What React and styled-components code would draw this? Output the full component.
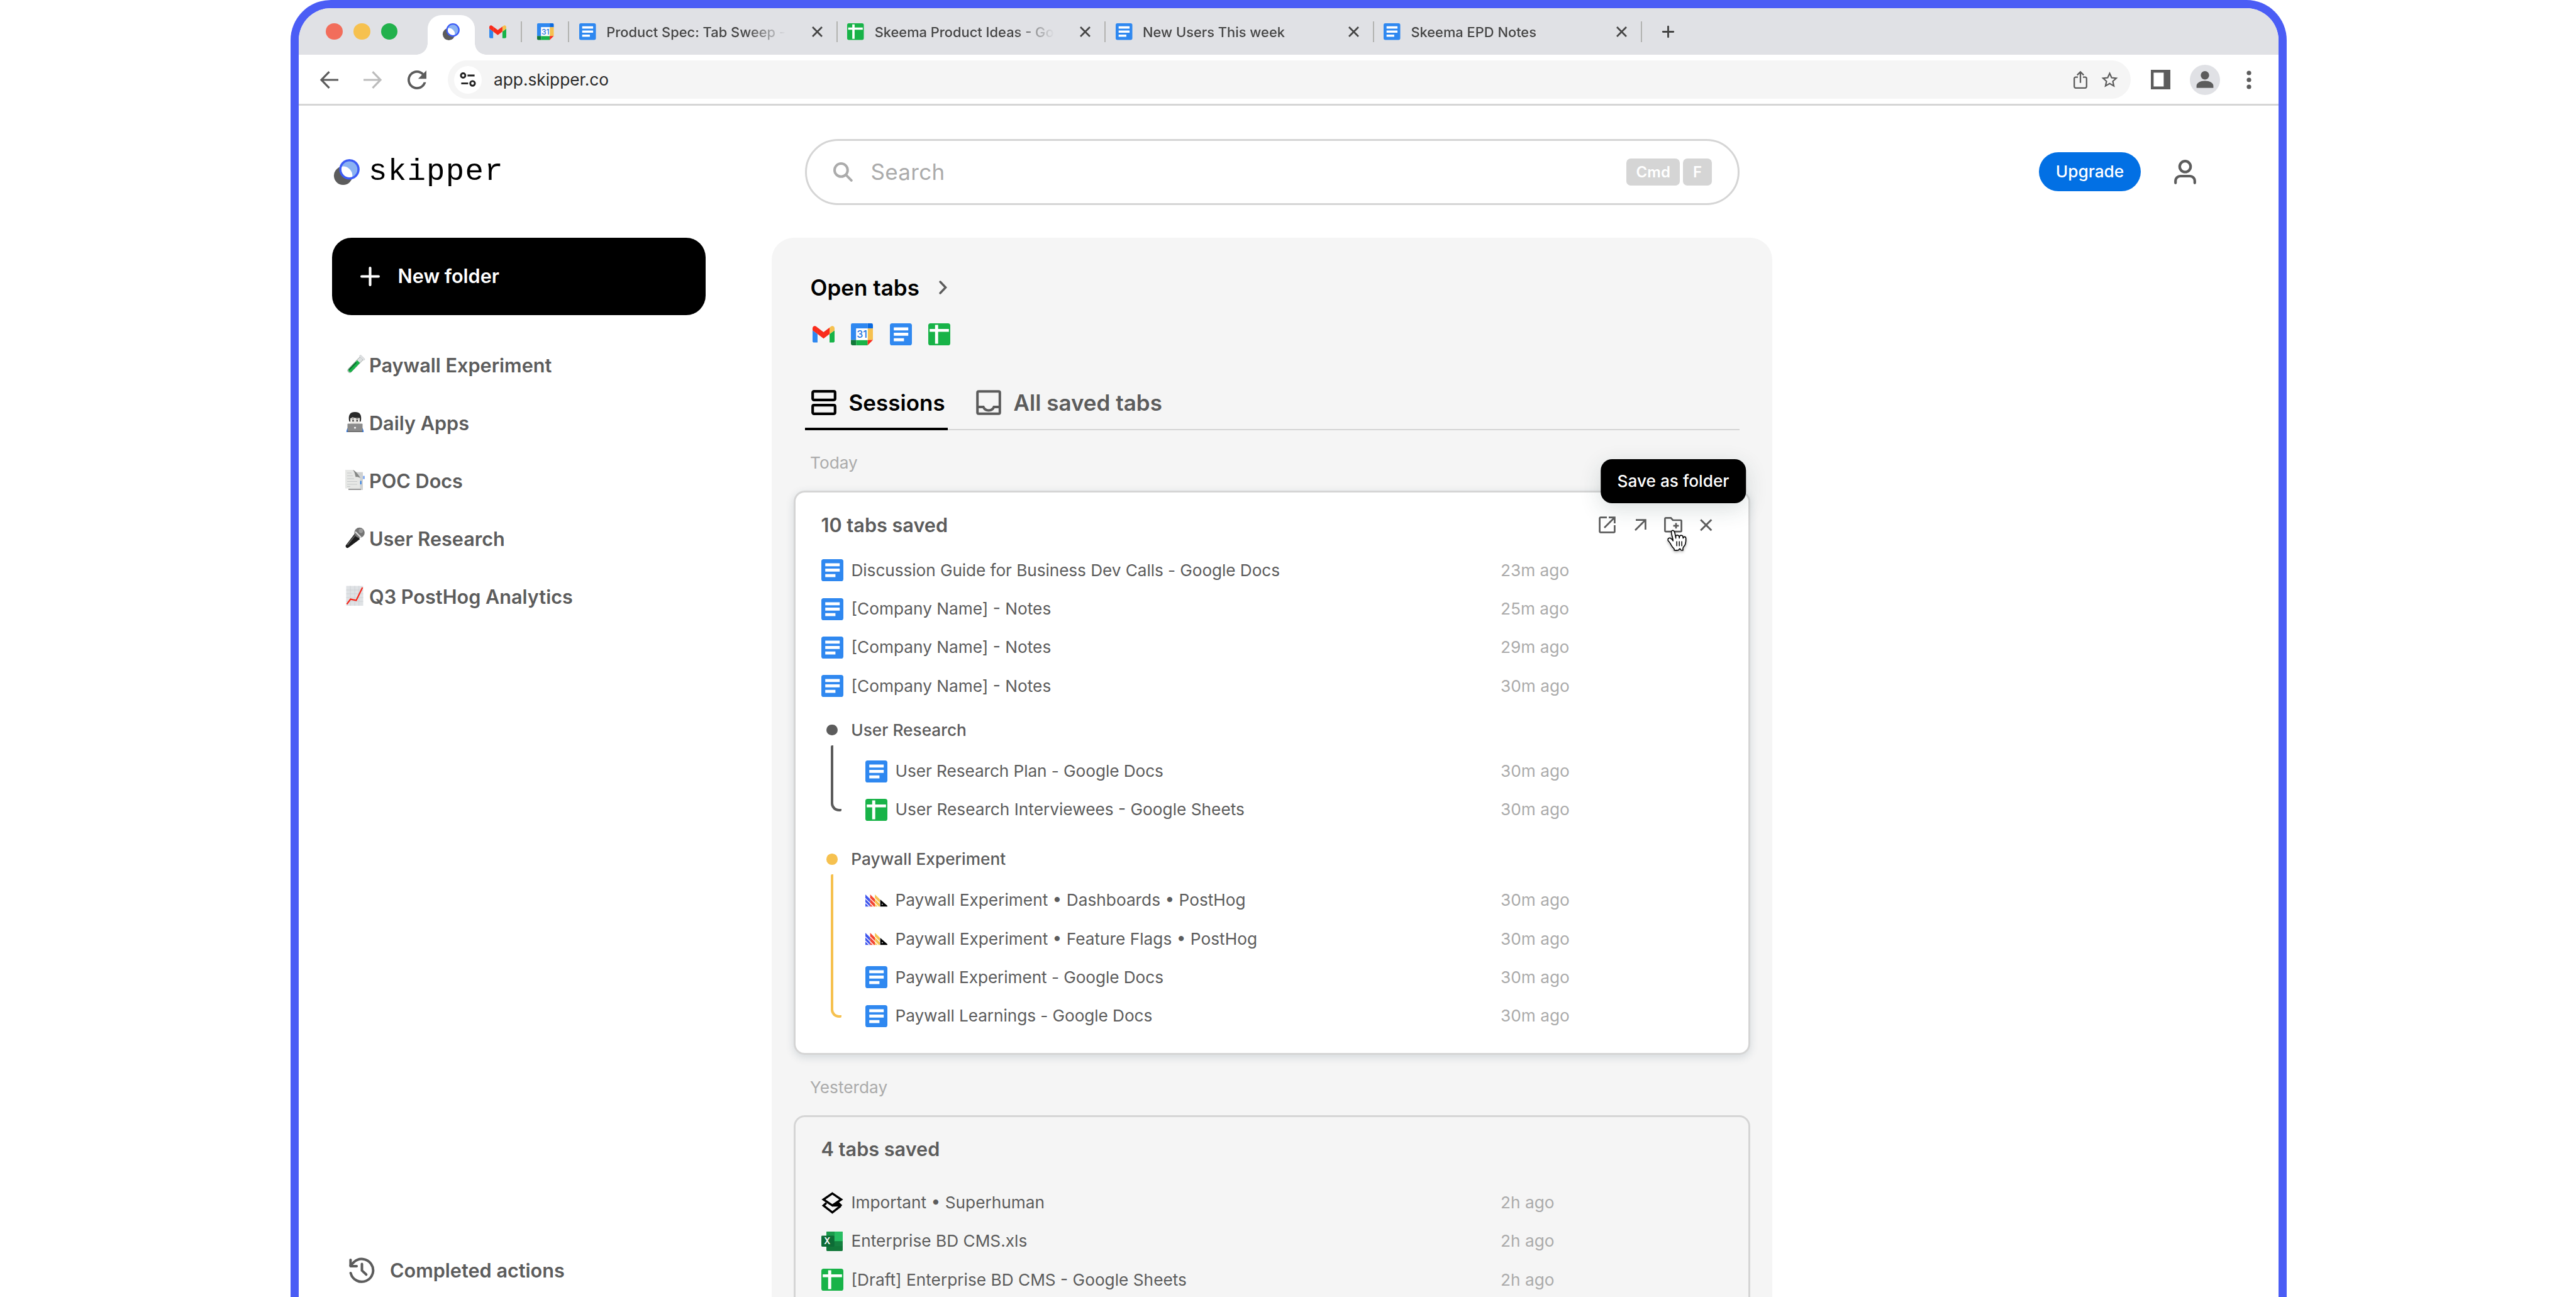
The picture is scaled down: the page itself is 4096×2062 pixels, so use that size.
import React from "react";
import styled, { createGlobalStyle, css } from "styled-components";

const GlobalStyle = createGlobalStyle`
  * { box-sizing: border-box; }
  html, body { margin: 0; padding: 0; background: #ffffff; }
  body { font-family: Inter, "Liberation Sans", sans-serif; color: #5c5c5c; }
  svg { display: block; flex: none; overflow: visible; }
`;

const INK = "#5c5c5c";
const MUTED = "#ababab";
const LINE = "#d5d5d5";
const BLUE = "#2f88f0";
const GREEN = "#18b348";
const YELLOW = "#f6c14f";

/* ---------- icons ---------- */

const DocsIcon = ({ size = 35 }) => (
  <svg width={size} height={size} viewBox="0 0 35 35">
    <rect width="35" height="35" rx="3.6" fill={BLUE} />
    <path d="M6.2 6.4h23v4.9h-23zM6.2 15.1h23v4.6h-23zM6.2 23.7h16.2v4.8H6.2z" fill="#fff" />
  </svg>
);

const SheetsIcon = ({ size = 35 }) => (
  <svg width={size} height={size} viewBox="0 0 35 35">
    <rect width="35" height="35" rx="3.6" fill={GREEN} />
    <path d="M2.2 9h30.6v4.4H2.2zM10.8 2.4h4.9v30.2h-4.9z" fill="#fff" />
  </svg>
);

const DayNumber = styled.text`
  font: 500 16px Inter, sans-serif;
  fill: #1f76e0;
`;

const CalendarIcon = ({ size = 35 }) => (
  <svg width={size} height={size} viewBox="0 0 35 35">
    <path d="M2.4 0H26.6V8.2H8.4V26.6H0V2.4A2.4 2.4 0 0 1 2.4 0z" fill={BLUE} />
    <path d="M26.6 0h6a2.4 2.4 0 0 1 2.4 2.4v5.8h-8.4z" fill="#0b6ae0" />
    <path d="M26.6 8.2H35v18.4h-8.4z" fill={YELLOW} />
    <path d="M0 26.6h8.4V35h-6A2.4 2.4 0 0 1 0 32.6z" fill="#12783a" />
    <path d="M8.4 26.6h18.2V35H8.4z" fill={GREEN} />
    <path d="M26.6 26.6H35L26.6 35z" fill="#f92c1c" />
    <path d="M8.4 8.2h18.2v18.4H8.4z" fill="#fff" />
    <DayNumber x="17.5" y="23.4" textAnchor="middle">31</DayNumber>
  </svg>
);

const GmailIcon = ({ size = 35 }) => (
  <svg width={size} height={size} viewBox="52 31 88 88">
    <path d="M58 108h14V74L52 59v43c0 3.32 2.69 6 6 6" fill={BLUE} />
    <path d="M120 108h14c3.32 0 6-2.69 6-6V59l-20 15" fill={GREEN} />
    <path d="M120 48v26l20-15v-8c0-7.42-8.47-11.65-14.4-7.2" fill={YELLOW} />
    <path d="M72 74V48l24 18 24-18v26L96 92" fill="#f92c1c" />
    <path d="M52 51v8l20 15V48l-5.6-4.2c-5.94-4.45-14.4-.22-14.4 7.2" fill="#f92c1c" />
  </svg>
);

const SkipperIcon = ({ size, id }) => (
  <svg width={size} height={size} viewBox="0 0 51 51">
    <clipPath id={id}>
      <circle cx="30.6" cy="20.2" r="18" />
    </clipPath>
    <circle cx="18.2" cy="32.7" r="18.3" fill={INK} />
    <circle cx="30.6" cy="20.2" r="18" fill="#8bb2f2" />
    <circle cx="18.2" cy="32.7" r="18.3" fill="#fff" clipPath={`url(#${id})`} />
    <circle cx="30.6" cy="20.2" r="18" fill="none" stroke="#3d5cf6" strokeWidth="4.4" />
  </svg>
);

const PostHogIcon = () => (
  <svg width="35" height="35" viewBox="0 0 35 35">
    <path d="M0 8l7.6 7.6V27.3H0z" fill="#3d55ee" />
    <path d="M7.6 8l7.6 7.6V27.3H7.6z" fill="#f4442f" />
    <path d="M15.2 8l7.8 7.8V27.3h-7.8z" fill={YELLOW} />
    <path d="M0 14.4l12.8 12.9M0 21l6.4 6.3M7.6 14.4l12.9 12.9M15.2 14.4L23 22.2" stroke="#fff" strokeWidth="1.3" />
    <path d="M23.6 16l11.4 10v1.3H23.6z" fill="#000" />
    <circle cx="26.8" cy="23.6" r=".9" fill="#fff" />
  </svg>
);

const SuperhumanIcon = () => (
  <svg width="35" height="35" viewBox="0 0 35 35">
    <g fill="none" stroke="#000" strokeWidth="3.4">
      <path d="M17.5 2.4L31.6 12 17.5 21.4 3.4 12z" />
      <path d="M8 17.4l-4.600 4.200L17.500 32.600 30.600 22.400" />
    </g>
    <path d="M17.5 23.200v-2L26.800 15l6.400 6-2 2.200z" fill="#000" />
  </svg>
);

const ExcelMark = styled.text`
  font: 600 14px Inter, sans-serif;
  fill: #ffffff;
`;

const ExcelIcon = () => (
  <svg width="35" height="35" viewBox="0 0 35 35">
    <rect x="8" y="2" width="26" height="31" rx="1.4" fill="#12783a" />
    <path d="M9.4 2H21v15.4H8V3.4A1.4 1.4 0 0 1 9.4 2z" fill="#1b9a4c" />
    <path d="M21 2h11.6A1.4 1.4 0 0 1 34 3.4v14H21z" fill="#27bd62" />
    <path d="M21 17.4h13v7.8H21z" fill="#14803f" />
    <rect x="0" y="8.4" width="20.6" height="17.6" rx="1.4" fill="#0d6b36" />
    <ExcelMark x="9.4" y="22.4" textAnchor="middle">X</ExcelMark>
  </svg>
);

const CloseIcon = ({ size, weight }) => (
  <svg width={size} height={size} viewBox="0 0 20 20" fill="none" stroke="currentColor" strokeWidth={weight}>
    <path d="M1.2 1.2l17.6 17.6M18.8 1.2L1.2 18.8" />
  </svg>
);

const PlusIcon = ({ size, weight }) => (
  <svg width={size} height={size} viewBox="0 0 30 30" fill="none" stroke="currentColor" strokeWidth={weight} strokeLinecap="round">
    <path d="M15 2v26M2 15h26" />
  </svg>
);

const ArrowIcon = ({ flip }) => (
  <svg width="29" height="28" viewBox="0 0 29 28" fill="none" stroke="currentColor" strokeWidth="3.2">
    <path d={flip ? "M0 14h27M14.5 1.2L27 14 14.5 26.8" : "M29 14H2M14.5 1.2L2 14l12.5 12.8"} />
  </svg>
);

const ReloadIcon = () => (
  <svg width="30" height="30" viewBox="4 4 16 16">
    <path
      fill="currentColor"
      d="M17.65 6.35C16.2 4.9 14.21 4 12 4c-4.42 0-7.99 3.58-7.99 8s3.57 8 7.99 8c3.73 0 6.84-2.55 7.73-6h-2.08c-.82 2.33-3.04 4-5.65 4-3.31 0-6-2.69-6-6s2.69-6 6-6c1.66 0 3.14.69 4.22 1.78L13 11h7V4l-2.35 2.35z"
    />
  </svg>
);

const TuneIcon = () => (
  <svg width="26" height="23" viewBox="0 0 26 23" fill="none" stroke="#222" strokeWidth="2.9">
    <circle cx="5.4" cy="5" r="3.5" />
    <path d="M12.4 5h11.2M2.4 17.6h11" />
    <circle cx="20.4" cy="17.6" r="3.7" />
  </svg>
);

const ShareIcon = () => (
  <svg width="22" height="28" viewBox="0 0 22 28" fill="none" stroke={INK} strokeWidth="2.3">
    <path d="M7 9.6H3.4a2.2 2.2 0 0 0-2.2 2.2v12.8a2.2 2.2 0 0 0 2.2 2.2h15.2a2.2 2.2 0 0 0 2.2-2.2V11.8a2.2 2.2 0 0 0-2.2-2.2H15" />
    <path d="M11 18.8V1.8M5.8 6.4L11 1.4l5.2 5" />
  </svg>
);

const StarIcon = () => (
  <svg width="27" height="25" viewBox="0 0 27 25" fill="none" stroke={INK} strokeWidth="2.2">
    <path d="M13.5 2.6l3.1 6.9 7.4.8-5.5 5 1.6 7.3-6.6-3.8-6.6 3.8 1.6-7.3-5.5-5 7.4-.8z" />
  </svg>
);

const SidePanelIcon = () => (
  <svg width="31" height="31" viewBox="0 0 31 31">
    <path fillRule="evenodd" d="M0 0h31v31H0zM4.4 4.6h16v22h-16z" fill={INK} />
  </svg>
);

const PersonSolidIcon = () => (
  <svg width="28" height="27" viewBox="0 0 28 27" fill={INK}>
    <circle cx="14" cy="6.7" r="6.7" />
    <path d="M.6 26.8v-3.4c0-4.4 6-7.8 13.4-7.8s13.4 3.4 13.4 7.8v3.4z" />
  </svg>
);

const KebabIcon = () => (
  <svg width="8" height="30" viewBox="0 0 8 30" fill={INK}>
    <circle cx="4" cy="4" r="3.6" />
    <circle cx="4" cy="15" r="3.6" />
    <circle cx="4" cy="26" r="3.6" />
  </svg>
);

const SearchIcon = () => (
  <svg width="31" height="31" viewBox="0 0 31 31" fill="none" stroke={MUTED} strokeWidth="4" strokeLinecap="round">
    <circle cx="12.4" cy="12.4" r="10.4" />
    <path d="M20.2 20.2l8.6 8.6" />
  </svg>
);

const UserIcon = () => (
  <svg width="35" height="39" viewBox="0 0 35 39" fill="none" stroke={INK} strokeWidth="4.2" strokeLinecap="round">
    <circle cx="17.5" cy="10.8" r="8.7" />
    <path d="M2.2 36.8v-3.2a7.6 7.6 0 0 1 7.6-7.6h15.4a7.6 7.6 0 0 1 7.6 7.6v3.2" />
  </svg>
);

const ChevronIcon = () => (
  <svg width="13" height="22" viewBox="0 0 13 22" fill="none" stroke={INK} strokeWidth="3.4" strokeLinecap="round">
    <path d="M2 2l8.6 9L2 20" />
  </svg>
);

const SessionsIcon = () => (
  <svg width="40" height="40" viewBox="0 0 40 40" fill="none" stroke="#000" strokeWidth="4.2">
    <rect x="2.2" y="2.2" width="35.6" height="13.6" rx="2" />
    <rect x="2.2" y="24.2" width="35.6" height="13.6" rx="2" />
  </svg>
);

const InboxIcon = () => (
  <svg width="40" height="40" viewBox="0 0 40 40" fill="none" stroke={INK} strokeWidth="4">
    <rect x="2.2" y="2.2" width="35.6" height="35.6" rx="2" />
    <path d="M2.2 27h9.4c1.4 3.4 4.6 5.4 8.4 5.4s7-2 8.4-5.4h9.4" />
  </svg>
);

const HistoryIcon = () => (
  <svg width="41" height="41" viewBox="1.8 1.8 20.4 20.4" fill="none" stroke={INK} strokeWidth="2" strokeLinecap="round" strokeLinejoin="round">
    <path d="M3.1 14.2a9 9 0 1 0 2.5-8.6L3 8.2" />
    <path d="M3 3.8v5h4.8" />
    <path d="M12 7v5.2l3.4 3.2" />
  </svg>
);

const NewWindowIcon = () => (
  <svg width="27" height="27" viewBox="0 0 27 27" fill="none" stroke="currentColor" strokeWidth="2.7">
    <path d="M13 1.6H3a1.4 1.4 0 0 0-1.4 1.4v21A1.4 1.4 0 0 0 3 25.4h21a1.4 1.4 0 0 0 1.4-1.4V14" />
    <path d="M9 18L25 2M16 1.6h9.4V11" />
  </svg>
);

const ArrowUpRightIcon = () => (
  <svg width="19" height="19" viewBox="0 0 19 19" fill="none" stroke="currentColor" strokeWidth="2.7">
    <path d="M1 18L17 2M2 1.6h15.4V17" />
  </svg>
);

const FolderPlusIcon = () => (
  <svg width="29" height="25" viewBox="0 0 29 25" fill="none" stroke="currentColor" strokeWidth="2.7">
    <path d="M1.4 2.8c0-.8.6-1.4 1.4-1.4h8L14 5h12.2c.8 0 1.4.6 1.4 1.4v15.4c0 .8-.6 1.4-1.4 1.4H2.8c-.8 0-1.4-.6-1.4-1.4z" />
    <path d="M19 9.4v8.8M14.6 13.8h8.8" />
  </svg>
);

const HandCursorIcon = () => (
  <svg width="34" height="36" viewBox="7.6 7.2 16.8 18.2">
    <path
      d="M11.3 20.4c-.3-.4-.6-1.1-1.2-2-.3-.5-1.2-1.5-1.5-1.9-.2-.4-.2-.6-.1-1 .1-.6.7-1.1 1.4-1.1.5 0 1 .4 1.4.7.2.2.5.6.7.8.2.2.2.3.4.5.2.3.3.5.2.1-.1-.5-.2-1.3-.4-2.1-.1-.6-.2-.7-.3-1.1-.1-.5-.2-.8-.3-1.3-.1-.3-.2-1.1-.3-1.5-.1-.5-.1-1.4.3-1.8.3-.3.9-.4 1.3-.2.5.3.8 1 .9 1.3.2.5.4 1.2.5 2 .2 1 .5 2.5.5 2.8 0-.4-.1-1.1 0-1.5.1-.3.3-.7.7-.8.3-.1.6-.1.9-.1.3.1.6.3.8.5.4.6.4 1.9.4 1.8.1-.4.1-1.2.3-1.6.1-.2.5-.4.7-.5.3-.1.7-.1 1 0 .2 0 .6.3.7.5.2.3.3 1.3.4 1.7 0 .1.1-.4.3-.7.4-.6 1.8-.8 1.9.6v1.8c0 .5 0 .8-.1 1.2 0 .4-.2 1.3-.3 1.7-.1.3-.4 1-.7 1.4 0 0-1.1 1.2-1.2 1.8-.1.6-.1.6-.1 1 0 .4.1.9.1.9s-.8.1-1.2 0c-.4-.1-.9-.8-1-1.1-.2-.3-.5-.3-.7 0-.2.4-.7 1.1-1.1 1.1-.7.1-2.1 0-3.1 0 0 0 .2-1-.2-1.4-.3-.3-.8-.8-1.1-1.1z"
      fill="#fff"
      stroke="#000"
      strokeWidth=".8"
      strokeLinejoin="round"
    />
    <path d="M19.6 20.7v-3.4M17.6 20.7v-3.4M15.6 17.3v3.4" stroke="#000" strokeWidth=".75" strokeLinecap="round" />
  </svg>
);

/* Sidebar folder pictograms */

const TestTubeIcon = () => (
  <svg width="38" height="38" viewBox="0 0 38 38">
    <g transform="translate(20.4 19.4) rotate(44) scale(.86) translate(-19 -17.6)">
      <rect x="15" y="0" width="8" height="37" rx="4" fill="#dcdfe0" stroke="#9aa09c" strokeWidth="1" />
      <path d="M15.8 10h7v23a3.600 3.600 0 0 1-7 0z" fill="#18b348" />
      <path d="M16 14h2.400v20a3 3 0 0 1-2.400-2z" fill="#0f6a30" />
      <rect x="13.200" y="-1.600" width="11.600" height="3.600" rx="1.600" fill="#dfe1e3" stroke="#bcc0c2" strokeWidth=".7" />
    </g>
  </svg>
);

const TechnologistIcon = () => (
  <svg width="38" height="38" viewBox="0 0 38 38">
    <path d="M5.800 35c.2-4 1.400-7 4-8h19.400c2.600 1 3.800 4 4 8z" fill="#1f6fe6" />
    <rect x="11.500" y="8" width="16" height="17" rx="7" fill="#eceae6" />
    <path d="M10.200 18C8.200 7 12 3 19.500 3S30.800 7 28.800 18l-1.800.4V12.600c-5 0-9-.4-11.500-1.200L12 13.200v5.200z" fill="#2a2a2a" />
    <path d="M14.400 14h3.400M21.200 14h3.400" stroke="#333" strokeWidth="1" />
    <circle cx="16.400" cy="17" r="1.200" fill="#111" />
    <circle cx="22.800" cy="17" r="1.200" fill="#111" />
    <rect x="7.500" y="21.600" width="24" height="12.600" rx="1" fill="#8b8b8b" />
    <path d="M7.600 33.400h23.800V35H7.600z" fill="#6a6a6a" />
    <circle cx="19.500" cy="28" r="1.500" fill="#fff" />
  </svg>
);

const TabbedPagesIcon = () => (
  <svg width="38" height="38" viewBox="0 0 38 38">
    <path d="M9 6.600h23V35H9z" fill="#cfd1d1" />
    <path d="M9 33.400h20V35H9z" fill="#8e8e8e" />
    <path d="M32 12.600h3v5h-3z" fill="#86aef2" />
    <path d="M27.600 20.500h2V26h-2z" fill="#1f76e6" />
    <path d="M4 3h12c4 1 4 6 5 11 2 0 5 0 6.500 1v17.600H4z" fill="#e6e7e5" />
    <path d="M16 3c4 1.600 9 7 12 13-2.600-1.400-4.600-2-7.400-1.600C19.400 10 19 6 16 3z" fill="#858785" />
    <path d="M7 8h7M7 12.500h9M7 17h11M7 21.500h16M7 26h16M7 29.500h5" stroke="#c6caca" strokeWidth="1.100" />
  </svg>
);

const MicrophoneIcon = () => (
  <svg width="38" height="38" viewBox="0 0 38 38">
    <path d="M19 12.600l8.400 8.400L9.200 34.600c-1.400 1-2.800.8-3.800-.4s-1.200-2.400-.2-3.600z" fill="#1c1c1c" />
    <path d="M21 13.400L7.400 30.400" stroke="#5a5a5a" strokeWidth="2" />
    <circle cx="26.600" cy="11" r="8.200" fill="#747474" />
    <path d="M19.800 9.200l9.400 9.400" stroke="#dcdcdc" strokeWidth="2.200" />
    <circle cx="28.800" cy="8" r="3.400" fill="#9a9a9a" />
  </svg>
);

const ChartIcon = () => (
  <svg width="38" height="38" viewBox="0 0 38 38">
    <rect x="5.500" y="3.500" width="27" height="31.500" fill="#dfe2e5" />
    <path d="M5.500 10h27M5.500 16h27M5.500 22h27M5.500 28h27M12.200 3.500V35M19 3.500V35M25.700 3.500V35" stroke="#cbcfd3" strokeWidth=".8" />
    <path d="M6.400 32.600l6-8 9 2L31.400 6" fill="none" stroke="#f5261a" strokeWidth="2.200" />
  </svg>
);

/* ---------- browser window ---------- */

const Page = styled.div`
  width: 4096px;
  height: 2062px;
  padding: 0 460px 0 462px;
  overflow: hidden;
  background: #ffffff;
`;

const BrowserWindow = styled.div`
  display: flex;
  flex-direction: column;
  height: 2062px;
  border: 13px solid #4b5df5;
  border-bottom: 0;
  border-radius: 64px 64px 0 0;
  background: #ffffff;
  overflow: hidden;
`;

const TabStrip = styled.div`
  display: flex;
  align-items: center;
  height: 74px;
  flex: none;
  background: #e0e1e5;
`;

const TrafficLights = styled.div`
  display: flex;
  gap: 17.4px;
  padding: 0 48px 0 43.4px;
`;

const Light = styled.span`
  width: 26.4px;
  height: 26.4px;
  border-radius: 50%;
  background: ${(p) => p.$color};
`;

const ActiveTab = styled.div`
  position: relative;
  align-self: flex-end;
  display: flex;
  align-items: center;
  justify-content: center;
  width: 75px;
  height: 63.5px;
  padding-bottom: 10px;
  border-radius: 22px 22px 0 0;
  background: #ffffff;

  &::before,
  &::after {
    content: "";
    position: absolute;
    bottom: 0;
    width: 18px;
    height: 18px;
  }
  &::before {
    right: 100%;
    background: radial-gradient(circle at 0 0, transparent 17.5px, #ffffff 18px);
  }
  &::after {
    left: 100%;
    background: radial-gradient(circle at 100% 0, transparent 17.5px, #ffffff 18px);
  }
`;

const PinnedTab = styled.div`
  display: flex;
  align-items: center;
  justify-content: space-between;
  width: 75px;
`;

const TabDivider = styled.span`
  width: 2px;
  height: 33px;
  background: #b3b3b1;
`;

const BrowserTab = styled.div`
  display: flex;
  align-items: center;
  width: 426.4px;
  padding-left: 15.4px;
  color: #454545;
`;

const TabTitle = styled.span`
  width: 286px;
  margin: 1px 0 0 17px;
  overflow: hidden;
  white-space: nowrap;
  font-size: 21.875px;
  line-height: 30px;
  font-weight: 500;
  mask-image: linear-gradient(90deg, #000 78%, transparent 100%);
`;

const TabClose = styled.span`
  display: flex;
  margin: 0 22px 0 auto;
`;

const NewTab = styled.span`
  display: flex;
  margin-left: 32px;
  color: #454545;
`;

const Toolbar = styled.div`
  display: flex;
  align-items: center;
  height: 81px;
  flex: none;
  padding: 1px 43.5px 0 34px;
  border-bottom: 3px solid #d6d6d6;
  color: ${INK};
`;

const NavButton = styled.span`
  display: flex;
  margin-right: ${(p) => p.$gap}px;
  color: ${(p) => (p.$disabled ? "#bcbcbc" : INK)};
`;

const AddressBar = styled.div`
  display: flex;
  align-items: center;
  width: 2676px;
  height: 61px;
  padding: 0 20px 0 10.5px;
  border-radius: 31px;
  background: #f5f5f5;
`;

const SiteBadge = styled.span`
  display: flex;
  align-items: center;
  justify-content: center;
  width: 44px;
  height: 44px;
  border-radius: 50%;
  background: #ffffff;
`;

const Url = styled.span`
  margin-left: 19px;
  font-size: 26.25px;
  line-height: 36px;
  color: #2b2b2b;
`;

const AddressActions = styled.span`
  display: flex;
  align-items: center;
  gap: 22px;
  margin-left: auto;
`;

const BrowserActions = styled.div`
  display: flex;
  align-items: center;
  margin-left: auto;
`;

const Avatar = styled.span`
  display: flex;
  align-items: center;
  justify-content: center;
  width: 48px;
  height: 48px;
  margin: 0 42px 0 31px;
  border-radius: 50%;
  background: #e0e1e5;
`;

/* ---------- app header ---------- */

const columns = css`
  display: grid;
  grid-template-columns: 752px 1591px 1fr;
`;

const Header = styled.header`
  ${columns};
  align-items: center;
  height: 210px;
  flex: none;
`;

const Brand = styled.div`
  display: flex;
  align-items: center;
  gap: 14.5px;
  padding-left: 55.5px;
`;

const BrandName = styled.span`
  margin-bottom: 1px;
  font-family: "Liberation Mono", monospace;
  font-size: 49px;
  line-height: 56px;
  letter-spacing: 1.3px;
  color: #000000;
`;

const SearchBox = styled.div`
  display: flex;
  align-items: center;
  height: 105px;
  margin: 0 52.5px;
  padding: 0 41px 0 42.5px;
  border: 3px solid ${LINE};
  border-radius: 53px;
`;

const Placeholder = styled.span`
  margin-left: 28.5px;
  font-size: 35px;
  line-height: 44px;
  letter-spacing: 0.3px;
  color: ${MUTED};
`;

const Shortcut = styled.span`
  display: flex;
  gap: 5px;
  margin-left: auto;
`;

const Key = styled.kbd`
  padding: 0 ${(p) => p.$pad}px;
  border-radius: 7px;
  background: ${LINE};
  font: 600 24px/43px Inter, sans-serif;
  color: #ffffff;
`;

const Account = styled.div`
  display: flex;
  align-items: center;
  gap: 53px;
  padding-left: 424px;
`;

const UpgradeButton = styled.button`
  width: 162px;
  height: 61.5px;
  padding: 0;
  border: 0;
  border-radius: 31px;
  background: #0270e4;
  font: 500 26.25px/32px Inter, sans-serif;
  color: #ffffff;
`;

/* ---------- body ---------- */

const Body = styled.div`
  ${columns};
  grid-template-rows: minmax(0, 1fr);
  flex: 1;
  min-height: 0;
`;

const Sidebar = styled.nav`
  display: flex;
  flex-direction: column;
  padding: 0 105px 16.5px 52.5px;
  font-size: 30.625px;
  font-weight: 600;
`;

const NewFolderButton = styled.button`
  display: flex;
  align-items: center;
  gap: 28.5px;
  height: 122.5px;
  margin-bottom: 34.5px;
  padding: 0 45.5px;
  border: 0;
  border-radius: 31px;
  background: #000000;
  font: 600 30.625px/40px Inter, sans-serif;
  color: #ffffff;
`;

const FolderLink = styled.div`
  display: flex;
  align-items: center;
  gap: 4px;
  height: 91.9px;
  padding-left: 17.5px;
  line-height: 40px;
`;

const Glyph = styled.span`
  display: flex;
  margin-top: -4px;
`;

const CompletedActions = styled.div`
  display: flex;
  align-items: center;
  gap: 24px;
  height: 52.5px;
  margin-top: auto;
  padding-left: 27.5px;
`;

const Panel = styled.main`
  display: flex;
  flex-direction: column;
  padding: 52.5px 35px 0;
  border-radius: 35px 35px 0 0;
  background: #f5f5f5;

  & > * {
    flex: none;
  }
`;

const PanelTop = styled.section`
  padding: 0 17.5px;
`;

const OpenTabs = styled.h2`
  display: flex;
  align-items: center;
  gap: 31px;
  height: 52.5px;
  margin: 0;
  padding-left: 9px;
  font-size: 35px;
  font-weight: 600;
  color: #000000;
`;

const OpenTabIcons = styled.div`
  display: flex;
  gap: 26.2px;
  margin: 30.6px 0 52px;
  padding-left: 12.7px;
`;

const ViewTabs = styled.div`
  display: flex;
  gap: 45.5px;
  height: 83.6px;
  box-shadow: inset 0 -2px 0 ${LINE};
`;

const ViewTab = styled.div`
  display: flex;
  align-items: center;
  gap: 19.6px;
  width: ${(p) => (p.$active ? "227px" : "auto")};
  padding-left: ${(p) => (p.$active ? "10.5px" : "0")};
  padding-bottom: ${(p) => (p.$active ? "0" : "4px")};
  border-bottom: ${(p) => (p.$active ? "4px solid #000000" : "0")};
  font-size: 35px;
  font-weight: 600;
  white-space: nowrap;
  color: ${(p) => (p.$active ? "#000000" : INK)};
`;

const DayLabel = styled.div`
  display: flex;
  align-items: center;
  height: 96px;
  padding: 8px 0 0 26px;
  font-size: 26.25px;
  line-height: 32px;
  color: ${MUTED};
`;

const Card = styled.article`
  display: flex;
  flex-direction: column;
  padding: 25.5px 0 19px 40.5px;
  border: 3px solid ${LINE};
  border-radius: 17.5px;
  background: ${(p) => (p.$raised ? "#ffffff" : "transparent")};
  box-shadow: ${(p) => (p.$raised ? "0 4px 14px rgba(30, 60, 80, 0.15)" : "none")};
`;

const CardHeader = styled.div`
  display: flex;
  align-items: center;
  justify-content: space-between;
  height: 52.5px;
  margin-bottom: ${(p) => p.$gap}px;
  padding-right: 49.5px;
`;

const CardTitle = styled.h3`
  margin: 0;
  font-size: 30.625px;
  line-height: 40px;
  font-weight: 600;
`;

const Actions = styled.div`
  display: flex;
  gap: 17.5px;
`;

const ActionButton = styled.span`
  position: relative;
  display: flex;
  align-items: center;
  justify-content: center;
  width: 35px;
  height: 35px;
`;

const Tooltip = styled.span`
  position: absolute;
  left: 50%;
  bottom: calc(100% + 17.5px);
  width: 231.5px;
  border-radius: 18px;
  transform: translateX(-50%);
  background: #000000;
  box-shadow: 0 10px 35px rgba(30, 60, 60, 0.16);
  font-size: 26.25px;
  line-height: 70.4px;
  font-weight: 500;
  text-align: center;
  color: #ffffff;
`;

const Cursor = styled.span`
  position: absolute;
  left: 6.5px;
  top: 24px;
  filter: drop-shadow(0 2px 2px rgba(0, 0, 0, 0.3));
`;

const Row = styled.div`
  display: flex;
  align-items: center;
  height: 61.25px;
  font-size: 26.25px;
  line-height: 34px;
`;

const RowTitle = styled.span`
  flex: 1;
  margin-left: 13px;
  white-space: nowrap;
  letter-spacing: ${(p) => (p.$tight ? "-0.09px" : "0")};
`;

const RowTime = styled.span`
  width: 394px;
  color: ${MUTED};
`;

const Group = styled.section`
  margin: 8.75px 0;
`;

const GroupTitle = styled.h4`
  display: flex;
  align-items: center;
  gap: 21.8px;
  height: 61.25px;
  margin: 0 0 4.2px;
  padding-left: 8.5px;
  font-size: 26.25px;
  line-height: 34px;
  font-weight: 500;
`;

const Dot = styled.span`
  width: 17.5px;
  height: 17.5px;
  border-radius: 50%;
  background: ${(p) => p.$color};
`;

const GroupBody = styled.div`
  display: grid;
  grid-template-columns: 70px 1fr;
`;

const Rail = styled.span`
  width: 16.5px;
  margin: -10.5px 0 28px 15.5px;
  border: solid ${(p) => p.$color};
  border-width: 0 0 4px 4px;
  border-radius: 2px 0 2px 13px;
`;

/* ---------- data ---------- */

const browserTabs = [
  { icon: DocsIcon, title: "Product Spec: Tab Sweep -" },
  { icon: SheetsIcon, title: "Skeema Product Ideas - Go" },
  { icon: DocsIcon, title: "New Users This week" },
  { icon: DocsIcon, title: "Skeema EPD Notes" },
];

const folders = [
  { icon: TestTubeIcon, name: "Paywall Experiment" },
  { icon: TechnologistIcon, name: "Daily Apps" },
  { icon: TabbedPagesIcon, name: "POC Docs" },
  { icon: MicrophoneIcon, name: "User Research" },
  { icon: ChartIcon, name: "Q3 PostHog Analytics" },
];

const todayTabs = [
  { icon: DocsIcon, title: "Discussion Guide for Business Dev Calls - Google Docs", time: "23m ago" },
  { icon: DocsIcon, title: "[Company Name] - Notes", time: "25m ago" },
  { icon: DocsIcon, title: "[Company Name] - Notes", time: "29m ago" },
  { icon: DocsIcon, title: "[Company Name] - Notes", time: "30m ago" },
];

const todayGroups = [
  {
    name: "User Research",
    color: INK,
    tabs: [
      { icon: DocsIcon, title: "User Research Plan - Google Docs", time: "30m ago" },
      { icon: SheetsIcon, title: "User Research Interviewees - Google Sheets", time: "30m ago" },
    ],
  },
  {
    name: "Paywall Experiment",
    color: YELLOW,
    tabs: [
      { icon: PostHogIcon, title: "Paywall Experiment • Dashboards • PostHog", time: "30m ago" },
      { icon: PostHogIcon, title: "Paywall Experiment • Feature Flags • PostHog", time: "30m ago" },
      { icon: DocsIcon, title: "Paywall Experiment - Google Docs", time: "30m ago" },
      { icon: DocsIcon, title: "Paywall Learnings - Google Docs", time: "30m ago" },
    ],
  },
];

const yesterdayTabs = [
  { icon: SuperhumanIcon, title: "Important • Superhuman", time: "2h ago" },
  { icon: ExcelIcon, title: "Enterprise BD CMS.xls", time: "2h ago" },
  { icon: SheetsIcon, title: "[Draft] Enterprise BD CMS - Google Sheets", time: "2h ago" },
];

const TabRow = ({ icon: Icon, title, time }) => (
  <Row>
    <Icon />
    <RowTitle $tight={title.endsWith("Docs")}>{title}</RowTitle>
    <RowTime>{time}</RowTime>
  </Row>
);

const TabGroup = ({ name, color, tabs }) => (
  <Group>
    <GroupTitle>
      <Dot $color={color} />
      {name}
    </GroupTitle>
    <GroupBody>
      <Rail $color={color} />
      <div>
        {tabs.map((tab) => (
          <TabRow key={tab.title} {...tab} />
        ))}
      </div>
    </GroupBody>
  </Group>
);

const Browser = () => (
  <>
    <TabStrip>
      <TrafficLights>
        <Light $color="#f26d5b" />
        <Light $color={YELLOW} />
        <Light $color="#22b14c" />
      </TrafficLights>
      <ActiveTab>
        <SkipperIcon size={27} id="tab-logo" />
      </ActiveTab>
      <PinnedTab>
        <span />
        <GmailIcon size={27} />
        <TabDivider />
      </PinnedTab>
      <PinnedTab>
        <span />
        <CalendarIcon size={26.5} />
        <TabDivider />
      </PinnedTab>
      {browserTabs.map(({ icon: Icon, title }) => (
        <BrowserTab key={title}>
          <Icon size={26.5} />
          <TabTitle>{title}</TabTitle>
          <TabClose>
            <CloseIcon size={17} weight={3.2} />
          </TabClose>
          <TabDivider />
        </BrowserTab>
      ))}
      <NewTab>
        <PlusIcon size={19} weight={4.6} />
      </NewTab>
    </TabStrip>
    <Toolbar>
      <NavButton $gap={40}>
        <ArrowIcon />
      </NavButton>
      <NavButton $gap={40.5} $disabled>
        <ArrowIcon flip />
      </NavButton>
      <NavButton $gap={34}>
        <ReloadIcon />
      </NavButton>
      <AddressBar>
        <SiteBadge>
          <TuneIcon />
        </SiteBadge>
        <Url>app.skipper.co</Url>
        <AddressActions>
          <ShareIcon />
          <StarIcon />
        </AddressActions>
      </AddressBar>
      <BrowserActions>
        <SidePanelIcon />
        <Avatar>
          <PersonSolidIcon />
        </Avatar>
        <KebabIcon />
      </BrowserActions>
    </Toolbar>
  </>
);

export default function App() {
  return (
    <Page>
      <GlobalStyle />
      <BrowserWindow>
        <Browser />
        <Header>
          <Brand>
            <SkipperIcon size={41} id="brand-logo" />
            <BrandName>skipper</BrandName>
          </Brand>
          <SearchBox>
            <SearchIcon />
            <Placeholder>Search</Placeholder>
            <Shortcut>
              <Key $pad={15.5}>Cmd</Key>
              <Key $pad={15.5}>F</Key>
            </Shortcut>
          </SearchBox>
          <Account>
            <UpgradeButton>Upgrade</UpgradeButton>
            <UserIcon />
          </Account>
        </Header>
        <Body>
          <Sidebar>
            <NewFolderButton>
              <PlusIcon size={31} weight={4} />
              New folder
            </NewFolderButton>
            {folders.map(({ icon: Icon, name }) => (
              <FolderLink key={name}>
                <Glyph>
                  <Icon />
                </Glyph>
                {name}
              </FolderLink>
            ))}
            <CompletedActions>
              <HistoryIcon />
              Completed actions
            </CompletedActions>
          </Sidebar>
          <Panel>
            <PanelTop>
              <OpenTabs>
                Open tabs
                <ChevronIcon />
              </OpenTabs>
              <OpenTabIcons>
                <GmailIcon />
                <CalendarIcon />
                <DocsIcon />
                <SheetsIcon />
              </OpenTabIcons>
              <ViewTabs>
                <ViewTab $active>
                  <SessionsIcon />
                  Sessions
                </ViewTab>
                <ViewTab>
                  <InboxIcon />
                  All saved tabs
                </ViewTab>
              </ViewTabs>
            </PanelTop>
            <DayLabel>Today</DayLabel>
            <Card $raised>
              <CardHeader $gap={15}>
                <CardTitle>10 tabs saved</CardTitle>
                <Actions>
                  <ActionButton>
                    <NewWindowIcon />
                  </ActionButton>
                  <ActionButton>
                    <ArrowUpRightIcon />
                  </ActionButton>
                  <ActionButton>
                    <FolderPlusIcon />
                    <Tooltip>Save as folder</Tooltip>
                    <Cursor>
                      <HandCursorIcon />
                    </Cursor>
                  </ActionButton>
                  <ActionButton>
                    <CloseIcon size={19.5} weight={3} />
                  </ActionButton>
                </Actions>
              </CardHeader>
              {todayTabs.map((tab) => (
                <TabRow key={tab.time} {...tab} />
              ))}
              {todayGroups.map((group) => (
                <TabGroup key={group.name} {...group} />
              ))}
            </Card>
            <DayLabel>Yesterday</DayLabel>
            <Card>
              <CardHeader $gap={28}>
                <CardTitle>4 tabs saved</CardTitle>
              </CardHeader>
              {yesterdayTabs.map((tab) => (
                <TabRow key={tab.title} {...tab} />
              ))}
            </Card>
          </Panel>
        </Body>
      </BrowserWindow>
    </Page>
  );
}
